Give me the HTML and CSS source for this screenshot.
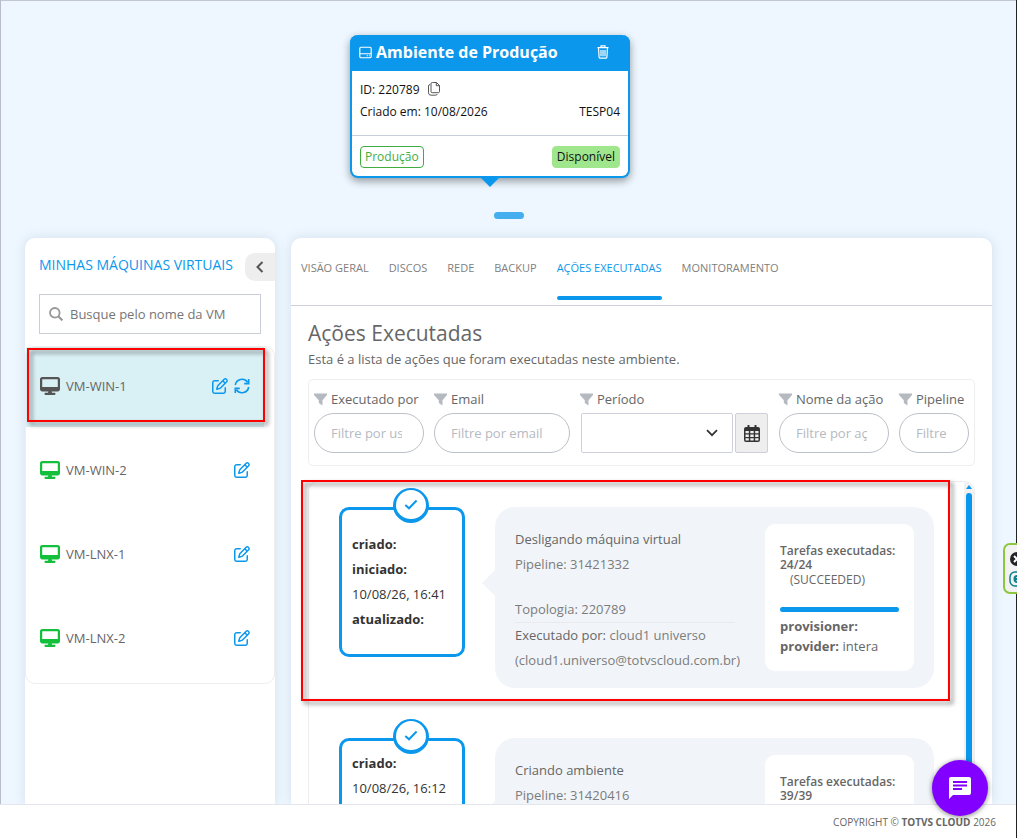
FILE: index.html
```html
<!DOCTYPE html>
<html lang="pt-BR">
<head>
  <meta charset="UTF-8" />
  <meta name="viewport" content="width=device-width, initial-scale=1" />
  <title>Ambiente de Produção</title>
  <link rel="stylesheet" href="styles.css">
</head>
<body>
  <!-- Ícones usados mais de uma vez -->
  <svg class="sprite" aria-hidden="true">
    <symbol id="i-desktop" viewBox="0 0 576 512">
      <path d="M64 0C28.7 0 0 28.7 0 64V352c0 35.3 28.7 64 64 64H240l-10.7 32H160c-17.7 0-32 14.3-32 32s14.3 32 32 32H416c17.7 0 32-14.3 32-32s-14.3-32-32-32H346.7L336 416H512c35.3 0 64-28.7 64-64V64c0-35.3-28.7-64-64-64H64zM512 64V288H64V64H512z" />
    </symbol>
    <symbol id="i-edit" viewBox="0 0 512 512">
      <path d="M441 58.9L453.1 71c9.4 9.4 9.4 24.6 0 33.9L424 134.1 377.9 88 407 58.9c9.4-9.4 24.6-9.4 33.9 0zM209.8 256.2L344 121.9 390.1 168 255.8 302.2c-2.9 2.9-6.5 5-10.4 6.1l-58.5 16.7 16.7-58.5c1.1-3.9 3.2-7.5 6.1-10.4zM373.1 25L175.8 222.2c-8.7 8.7-15 19.4-18.3 31.1l-28.6 100c-2.4 8.4-.1 17.4 6.1 23.6s15.2 8.5 23.6 6.1l100-28.6c11.8-3.4 22.5-9.7 31.1-18.3L487 138.9c28.1-28.1 28.1-73.7 0-101.8L474.9 25C446.8-3.1 401.2-3.1 373.1 25zM88 64C39.4 64 0 103.4 0 152V424c0 48.6 39.4 88 88 88H360c48.6 0 88-39.4 88-88V312c0-13.3-10.7-24-24-24s-24 10.7-24 24V424c0 22.1-17.9 40-40 40H88c-22.1 0-40-17.9-40-40V152c0-22.1 17.9-40 40-40H200c13.3 0 24-10.7 24-24s-10.7-24-24-24H88z" />
    </symbol>
    <symbol id="i-filter" viewBox="0 0 13 13">
      <path d="M0 0.5H13V2L8.5 7.2V12.6L4.8 10V7.2L0 2Z" />
    </symbol>
    <symbol id="i-check" viewBox="0 0 14 11">
      <path d="M1.3 6L5 9.3L12.6 1.5" fill="none" stroke="currentColor" stroke-width="2" />
    </symbol>
  </svg>

  <main class="page">
    <!-- Cartão do ambiente -->
    <section class="stage">
      <article class="env-card">
        <header class="env-head">
          <svg class="icon-hdd" viewBox="0 0 16 16" fill="none" stroke="currentColor" stroke-width="1.4"><rect x="1" y="1.5" width="14" height="13" rx="1.5" /><path d="M1 9.5H15M9.5 12H11M12.3 12H13.5" /></svg>
          <h2>Ambiente de Produção</h2>
          <button type="button" class="icon-btn env-delete" aria-label="Excluir ambiente">
            <svg viewBox="0 0 12 14" fill="none" stroke="currentColor" stroke-width="1.2"><path d="M0.5 2.6H11.5M4 2.4V0.8H8V2.4M1.5 3L2.1 12.2Q2.2 13.2 3.2 13.2H8.8Q9.8 13.2 9.9 12.2L10.5 3M4 5V11.3M6 5V11.3M8 5V11.3" /></svg>
          </button>
        </header>
        <div class="env-body">
          <div class="env-line">
            <span>ID: 220789</span>
            <button type="button" class="icon-btn env-copy" aria-label="Copiar ID">
              <svg viewBox="0 0 12 14" fill="none" stroke="currentColor" stroke-width="0.9"><path d="M4.5 0.5H8.5L11.5 3.5V9.5Q11.5 10.7 10.3 10.7H4.2Q3 10.7 3 9.5V1.8Q3 0.5 4.5 0.5ZM8.3 0.5V3.7H11.5M2.2 2.5Q0.5 2.6 0.5 4V10.8Q0.5 13.2 3 13.2H7.5Q9 13.2 9.2 12" /></svg>
            </button>
          </div>
          <div class="env-line env-split">
            <span>Criado em: 10/08/2026</span>
            <span>TESP04</span>
          </div>
        </div>
        <footer class="env-foot">
          <span class="badge badge-outline">Produção</span>
          <span class="badge badge-ok">Disponível</span>
        </footer>
      </article>
      <div class="pager"></div>
    </section>

    <div class="panels">
      <!-- Lista de máquinas virtuais -->
      <aside class="panel sidebar">
        <div class="side-head">
          <h2>MINHAS MÁQUINAS VIRTUAIS</h2>
          <button type="button" class="collapse" aria-label="Recolher lista">
            <svg viewBox="0 0 8 12" fill="none" stroke="currentColor" stroke-width="2"><path d="M6.5 1L1.5 6L6.5 11" /></svg>
          </button>
        </div>
        <label class="search">
          <svg viewBox="0 0 14 14" fill="none" stroke="currentColor" stroke-width="1.8"><circle cx="5.8" cy="5.8" r="4.8" /><path d="M9.3 9.3L13.4 13.4" stroke-width="2.2" /></svg>
          <input type="text" placeholder="Busque pelo nome da VM" aria-label="Busque pelo nome da VM">
        </label>
        <ul class="vm-list">
          <li class="vm vm-active">
            <svg class="vm-icon"><use href="#i-desktop" /></svg>
            <span class="vm-name">VM-WIN-1</span>
            <button type="button" class="icon-btn vm-btn" aria-label="Editar VM-WIN-1"><svg><use href="#i-edit" /></svg></button>
            <button type="button" class="icon-btn vm-btn" aria-label="Atualizar VM-WIN-1">
              <svg viewBox="0 0 16 16" fill="none" stroke="currentColor" stroke-width="1.6"><path d="M1.3 7A6.8 6.8 0 0 1 13.6 4.2M14.7 9A6.8 6.8 0 0 1 2.4 11.8M14.7 1V5.6H10.2M1.3 15V10.4H5.8" /></svg>
            </button>
            <div class="mark mark-vm"></div>
          </li>
          <li class="vm">
            <svg class="vm-icon vm-on"><use href="#i-desktop" /></svg>
            <span class="vm-name">VM-WIN-2</span>
            <button type="button" class="icon-btn vm-btn" aria-label="Editar VM-WIN-2"><svg><use href="#i-edit" /></svg></button>
          </li>
          <li class="vm">
            <svg class="vm-icon vm-on"><use href="#i-desktop" /></svg>
            <span class="vm-name">VM-LNX-1</span>
            <button type="button" class="icon-btn vm-btn" aria-label="Editar VM-LNX-1"><svg><use href="#i-edit" /></svg></button>
          </li>
          <li class="vm">
            <svg class="vm-icon vm-on"><use href="#i-desktop" /></svg>
            <span class="vm-name">VM-LNX-2</span>
            <button type="button" class="icon-btn vm-btn" aria-label="Editar VM-LNX-2"><svg><use href="#i-edit" /></svg></button>
          </li>
        </ul>
      </aside>

      <section class="panel content">
        <nav class="tabs">
          <a href="#">VISÃO GERAL</a>
          <a href="#">DISCOS</a>
          <a href="#">REDE</a>
          <a href="#">BACKUP</a>
          <a href="#" class="active">AÇÕES EXECUTADAS</a>
          <a href="#">MONITORAMENTO</a>
        </nav>

        <div class="actions">
          <h1>Ações Executadas</h1>
          <p class="subtitle">Esta é a lista de ações que foram executadas neste ambiente.</p>

          <!-- Filtros -->
          <form class="filters">
            <div class="filter">
              <label for="f-user"><svg><use href="#i-filter" /></svg>Executado por</label>
              <input type="text" id="f-user" placeholder="Filtre por usuário">
            </div>
            <div class="filter">
              <label for="f-email"><svg><use href="#i-filter" /></svg>Email</label>
              <input type="text" id="f-email" placeholder="Filtre por email">
            </div>
            <div class="filter">
              <label for="f-period"><svg><use href="#i-filter" /></svg>Período</label>
              <div class="period">
                <div class="select">
                  <select id="f-period"><option></option></select>
                  <svg viewBox="0 0 12 8" fill="none" stroke="currentColor" stroke-width="1.7"><path d="M1 1.2L6 6.2L11 1.2" /></svg>
                </div>
                <button type="button" aria-label="Abrir calendário">
                  <svg viewBox="0 0 16 17"><path fill-rule="evenodd" d="M3.5 0H5.5V2H10.5V0H12.5V2H14Q16 2 16 4V15Q16 17 14 17H2Q0 17 0 15V4Q0 2 2 2H3.5ZM1.5 6V8.3H4.8V6ZM6.3 6V8.3H9.7V6ZM11.2 6V8.3H14.5V6ZM1.5 9.6V11.9H4.8V9.6ZM6.3 9.6V11.9H9.7V9.6ZM11.2 9.6V11.9H14.5V9.6ZM1.5 13.2V15.5H4.8V13.2ZM6.3 13.2V15.5H9.7V13.2ZM11.2 13.2V15.5H14.5V13.2Z" /></svg>
                </button>
              </div>
            </div>
            <div class="filter">
              <label for="f-action"><svg><use href="#i-filter" /></svg>Nome da ação</label>
              <input type="text" id="f-action" placeholder="Filtre por ação">
            </div>
            <div class="filter">
              <label for="f-pipe"><svg><use href="#i-filter" /></svg>Pipeline</label>
              <input type="text" id="f-pipe" placeholder="Filtre por pipeline">
            </div>
          </form>

          <!-- Linha do tempo -->
          <div class="timeline">
            <div class="entries">
              <article class="entry">
                <div class="dates">
                  <span class="done"><svg><use href="#i-check" /></svg></span>
                  <b>criado:</b>
                  <b>iniciado:</b>
                  <span>10/08/26, 16:41</span>
                  <b>atualizado:</b>
                </div>
                <div class="bubble">
                  <div class="info">
                    <p class="name">Desligando máquina virtual</p>
                    <p>Pipeline: 31421332</p>
                    <p class="topology">Topologia: 220789</p>
                    <p><span class="name">Executado por:</span>&nbsp;cloud1 universo<br>(cloud1.universo@totvscloud.com.br)</p>
                  </div>
                  <div class="tasks">
                    <p class="count">Tarefas executadas: 24/24</p>
                    <p class="status">(SUCCEEDED)</p>
                    <div class="bar"></div>
                    <p><b>provisioner:</b></p>
                    <p><b>provider:</b> intera</p>
                  </div>
                </div>
              </article>
              <article class="entry">
                <div class="dates">
                  <span class="done"><svg><use href="#i-check" /></svg></span>
                  <b>criado:</b>
                  <span>10/08/26, 16:12</span>
                  <b>iniciado:</b>
                  <span>10/08/26, 16:12</span>
                  <b>atualizado:</b>
                </div>
                <div class="bubble">
                  <div class="info">
                    <p class="name">Criando ambiente</p>
                    <p>Pipeline: 31420416</p>
                  </div>
                  <div class="tasks">
                    <p class="count">Tarefas executadas: 39/39</p>
                  </div>
                </div>
              </article>
            </div>
            <div class="scroll">
              <svg viewBox="0 0 6 4"><path d="M3 0L6 4H0Z" /></svg>
              <div class="thumb"></div>
            </div>
            <div class="mark mark-entry"></div>
          </div>
        </div>
      </section>
    </div>
  </main>

  <footer class="copyright">COPYRIGHT © <b>TOTVS CLOUD</b> 2026</footer>

  <div class="side-widget">
    <svg viewBox="0 0 16 16"><circle cx="8" cy="8" r="7" fill="#222326" /><path d="M5 5L11 11M11 5L5 11" stroke="#fff" stroke-width="2" /></svg>
    <svg viewBox="0 0 16 16" fill="none" stroke="#0b7f8c" stroke-width="1.5"><rect x="1" y="1" width="14" height="14" rx="5" /><path d="M6 8H11Q11 5 8.3 5Q5.5 5 5.5 8Q5.5 11 8.5 11H11" stroke-width="2" /></svg>
  </div>

  <button type="button" class="chat" aria-label="Abrir chat">
    <svg viewBox="0 0 22 22"><path fill-rule="evenodd" d="M2 0H20Q22 0 22 2V16Q22 18 20 18H4L0 22V2Q0 0 2 0ZM4 4V6H18V4ZM4 7.5V9.5H18V7.5ZM4 11V13H13V11Z" /></svg>
  </button>
</body>
</html>
```
FILE: styles.css
```css
* {
  box-sizing: border-box;
}

body {
  margin: 0;
  height: 100vh;
  display: flex;
  flex-direction: column;
  overflow: hidden;
  border-right: 1px solid #222222;
  background-color: #ffffff;
  color: #666666;
  font-family: "Open Sans", "Noto Sans", sans-serif;
  font-size: 13px;
}

h1,
h2,
p,
ul {
  margin: 0;
  padding: 0;
  font-weight: 400;
}

input,
select,
button {
  font-family: inherit;
  font-size: 13px;
}

svg {
  display: block;
  fill: currentColor;
}

svg[fill="none"] {
  fill: none;
}

.sprite {
  position: absolute;
  width: 0;
  height: 0;
}

.icon-btn {
  padding: 0;
  border: 0;
  background: none;
  color: inherit;
  cursor: pointer;
}

.page {
  flex: 1;
  min-height: 0;
  display: flex;
  flex-direction: column;
  overflow: hidden;
  border-top: 1px solid #c3c7d2;
  border-left: 1px solid #b9bccb;
  background-color: #eef7ff;
}

/* Cartão do ambiente */
.stage {
  display: flex;
  flex-direction: column;
  align-items: center;
  padding: 34px 0 19px;
}

.env-card {
  position: relative;
  width: 280px;
  margin-right: 37px;
  border: 2px solid #0b98ec;
  border-top: 0;
  border-radius: 8px;
  background-color: #ffffff;
  box-shadow: 0 3px 8px rgba(0, 0, 0, 0.4);
  color: #111111;
  font-size: 12px;
}

.env-card::after {
  content: "";
  position: absolute;
  top: 100%;
  left: 50%;
  margin-left: -11px;
  border: 11px solid transparent;
  border-top-color: #0b98ec;
  border-bottom: 0;
}

.env-head {
  display: flex;
  align-items: center;
  gap: 4px;
  height: 36px;
  margin: 0 -2px;
  padding: 0 21px 2px 9px;
  border-radius: 8px 8px 0 0;
  background-color: #0b98ec;
  color: #ffffff;
}

.env-head h2 {
  flex: 1;
  font-size: 16px;
  font-weight: 700;
}

.icon-hdd {
  width: 13px;
  height: 13px;
}

.env-delete svg,
.env-copy svg {
  width: 12px;
  height: 14px;
}

.env-copy {
  color: #444444;
}

.env-body {
  padding: 7px 8px 13px;
}

.env-line {
  display: flex;
  align-items: center;
  gap: 8px;
  height: 22px;
}

.env-split {
  justify-content: space-between;
}

.env-foot {
  display: flex;
  justify-content: space-between;
  padding: 10px 8px 8px;
  border-top: 1px solid #c9cfd8;
}

.badge {
  padding: 0 4px;
  border: 1px solid #a0e68c;
  border-radius: 4px;
  font-size: 12px;
  line-height: 20px;
}

.badge-outline {
  border-color: #3fae3f;
  color: #3fae3f;
}

.badge-ok {
  background-color: #a0e68c;
}

.pager {
  width: 30px;
  height: 7px;
  margin-top: 34px;
  border-radius: 4px;
  background-color: #45aeef;
}

/* Painéis */
.panels {
  flex: 1;
  min-height: 0;
  display: flex;
  gap: 16px;
  padding: 0 24px;
}

.panel {
  border-radius: 10px 10px 0 0;
  background-color: #ffffff;
  box-shadow: 0 0 12px rgba(60, 90, 120, 0.15);
}

.sidebar {
  flex: 0 0 250px;
}

.side-head {
  display: flex;
  align-items: flex-start;
  justify-content: space-between;
  padding: 15px 0 13px 14px;
}

.side-head h2 {
  color: #0b98ec;
  font-size: 14px;
  line-height: 24px;
}

.collapse {
  display: flex;
  align-items: center;
  justify-content: center;
  width: 30px;
  height: 28px;
  padding: 0;
  border: 0;
  border-radius: 10px 0 0 10px;
  background-color: #eeeeee;
  color: #555555;
}

.collapse svg {
  width: 8px;
  height: 12px;
}

.search {
  display: flex;
  align-items: center;
  gap: 7px;
  height: 40px;
  margin: 0 14px 12px;
  padding: 0 9px;
  border: 1px solid #c9cdd6;
  color: #999999;
}

.search svg {
  width: 14px;
  height: 14px;
}

.search input {
  flex: 1;
  min-width: 0;
  padding: 0;
  border: 0;
  outline: 0;
}

.search input::placeholder {
  color: #757575;
}

.vm-list {
  display: flex;
  flex-direction: column;
  gap: 4px;
  padding: 0 10px 4px 0;
  border: 1px solid #eeeeee;
  border-radius: 10px;
  list-style: none;
}

.vm {
  position: relative;
  display: flex;
  align-items: center;
  gap: 6px;
  height: 80px;
  padding: 0 14px 2px;
}

.vm-active {
  background-color: #d9f0f5;
}

.vm-icon {
  width: 20px;
  height: 18px;
  color: #555555;
}

.vm-on {
  color: #14bf3c;
}

.vm-name {
  flex: 1;
}

.vm-btn {
  color: #0b98ec;
}

.vm-btn svg {
  width: 16px;
  height: 16px;
}

/* Marcação vermelha sobre o item em destaque */
.mark {
  position: absolute;
  border: 2px solid #ff0000;
  filter: drop-shadow(3px 3px 2px rgba(0, 0, 0, 0.5));
  pointer-events: none;
}

.mark-vm {
  inset: 1px -1px 5px 1px;
}

.mark-entry {
  inset: -2px 24px auto -8px;
  height: 221px;
}

/* Conteúdo */
.content {
  flex: 1;
  min-width: 0;
  display: flex;
  flex-direction: column;
}

.tabs {
  display: flex;
  gap: 20px;
  height: 68px;
  padding: 0 10px;
  border-bottom: 1px solid #cdd0dc;
}

.tabs a {
  height: 62px;
  padding-top: 20px;
  border-bottom: 4px solid transparent;
  color: #808080;
  font-size: 11px;
  line-height: 20px;
  text-decoration: none;
  white-space: nowrap;
}

.tabs .active {
  position: relative;
  color: #0b98ec;
}

.tabs .active::after {
  content: "";
  position: absolute;
  right: 0;
  bottom: -4px;
  left: 0;
  height: 4px;
  border-radius: 2px;
  background-color: #0b98ec;
}

.actions {
  flex: 1;
  min-height: 0;
  display: flex;
  flex-direction: column;
  padding: 12px 17px 0;
}

.actions h1 {
  font-size: 21px;
  line-height: 30px;
}

.subtitle {
  margin-bottom: 9px;
  line-height: 22px;
}

.filters {
  display: grid;
  grid-template-columns: 110px 136px 1fr 110px 70px;
  gap: 10px;
  height: 87px;
  margin-bottom: 15px;
  padding: 9px 5px;
  border: 1px solid #eeeeee;
  border-radius: 5px;
}

.filter {
  display: flex;
  flex-direction: column;
  gap: 4px;
}

.filter label {
  display: flex;
  align-items: center;
  gap: 4px;
  line-height: 20px;
  white-space: nowrap;
}

.filter label svg {
  width: 13px;
  height: 13px;
  color: #b5bac1;
}

.filter input {
  width: 100%;
  height: 40px;
  padding: 0 21px 0 16px;
  border: 1px solid #bcc0c7;
  border-radius: 20px;
  outline: 0;
}

.filter input::placeholder {
  color: #b5bac1;
}

.period {
  display: flex;
  gap: 2px;
  padding: 0 1px;
}

.select {
  position: relative;
  flex: 1;
}

.select select {
  width: 100%;
  height: 40px;
  appearance: none;
  border: 1px solid #cdd0dc;
  border-radius: 2px;
  background-color: #ffffff;
}

.select svg {
  position: absolute;
  top: 16px;
  right: 15px;
  width: 12px;
  height: 8px;
  color: #333333;
  pointer-events: none;
}

.period button {
  display: flex;
  align-items: center;
  justify-content: center;
  width: 33px;
  height: 40px;
  padding: 0;
  border: 1px solid #cdd0dc;
  border-radius: 2px;
  background-color: #eeeeee;
  color: #333333;
}

.period button svg {
  width: 16px;
  height: 17px;
}

/* Linha do tempo */
.timeline {
  position: relative;
  flex: 1;
  min-height: 0;
  display: flex;
  border: 1px solid #eeeeee;
  border-bottom: 0;
  border-radius: 10px 10px 0 0;
}

.entries {
  flex: 1;
  min-width: 0;
  padding: 25px 30px 0;
}

.entry {
  display: flex;
  align-items: flex-start;
  gap: 30px;
  margin-bottom: 50px;
}

.dates {
  position: relative;
  flex: 0 0 126px;
  display: flex;
  flex-direction: column;
  justify-content: center;
  height: 150px;
  padding: 0 10px;
  border: 3px solid #0b98ec;
  border-radius: 10px;
  color: #333333;
  line-height: 25px;
}

.done {
  position: absolute;
  top: -22px;
  left: 51px;
  display: flex;
  align-items: center;
  justify-content: center;
  width: 36px;
  height: 35px;
  border: 3px solid #0b98ec;
  border-width: 2px 3px 4px;
  border-radius: 50%;
  background-color: #ffffff;
  color: #0b98ec;
}

.done svg {
  width: 14px;
  height: 11px;
}

.bubble {
  position: relative;
  flex: 1;
  min-width: 0;
  display: flex;
  gap: 30px;
  height: 181px;
  padding: 17px 20px;
  border-radius: 20px;
  background-color: #f1f5f9;
}

.bubble::before {
  content: "";
  position: absolute;
  top: 63px;
  left: -13px;
  border: 13px solid transparent;
  border-right-color: #f1f5f9;
  border-left: 0;
}

.info {
  flex: 1;
  min-width: 0;
  padding-top: 3px;
  color: #7c7c7c;
  font-weight: 300;
  line-height: 25px;
  white-space: nowrap;
}

.info .name {
  color: #666666;
  font-weight: 400;
}

.info .topology {
  padding-top: 20px;
  border-bottom: 1px solid #e8eaee;
}

.tasks {
  flex: 0 0 149px;
  height: 147px;
  padding: 20px 15px 0;
  border-radius: 10px;
  background-color: #ffffff;
  line-height: 20px;
}

.tasks .count {
  font-size: 12px;
  font-weight: 600;
  line-height: 14px;
}

.tasks .status {
  padding-left: 10px;
  font-size: 12px;
  line-height: 16px;
}

.bar {
  height: 5px;
  margin: 19px 0 4px;
  border-radius: 3px;
  background-color: #0b98ec;
}

.scroll {
  display: flex;
  flex-direction: column;
  align-items: center;
  gap: 4px;
  width: 10px;
  padding-top: 3px;
  border-radius: 0 10px 0 0;
  background-color: #f1f1f1;
  color: #0b98ec;
}

.scroll svg {
  width: 6px;
  height: 4px;
}

.thumb {
  flex: 1;
  width: 6px;
  border-radius: 3px 3px 0 0;
  background-color: #0b98ec;
}

/* Rodapé e elementos flutuantes */
.copyright {
  z-index: 1;
  height: 34px;
  padding: 0 20px;
  border-top: 1px solid #e3e7eb;
  background-color: #ffffff;
  font-size: 10px;
  line-height: 35px;
  text-align: right;
}

.side-widget {
  position: fixed;
  top: 543px;
  right: -10px;
  z-index: 2;
  display: flex;
  flex-direction: column;
  gap: 4px;
  width: 24px;
  padding: 6px 4px 5px;
  border: 2px solid #8dc63f;
  border-radius: 7px;
  background-color: #f2f2f2;
}

.side-widget svg {
  flex: none;
  width: 16px;
  height: 16px;
}

.chat {
  position: fixed;
  right: 29px;
  bottom: 22px;
  z-index: 2;
  display: flex;
  align-items: center;
  justify-content: center;
  width: 56px;
  height: 56px;
  padding: 0;
  border: 0;
  border-radius: 50%;
  background-color: #8200ff;
  box-shadow: 0 1px 5px rgba(0, 0, 0, 0.5);
  color: #ffffff;
}

.chat svg {
  width: 22px;
  height: 22px;
}
```
